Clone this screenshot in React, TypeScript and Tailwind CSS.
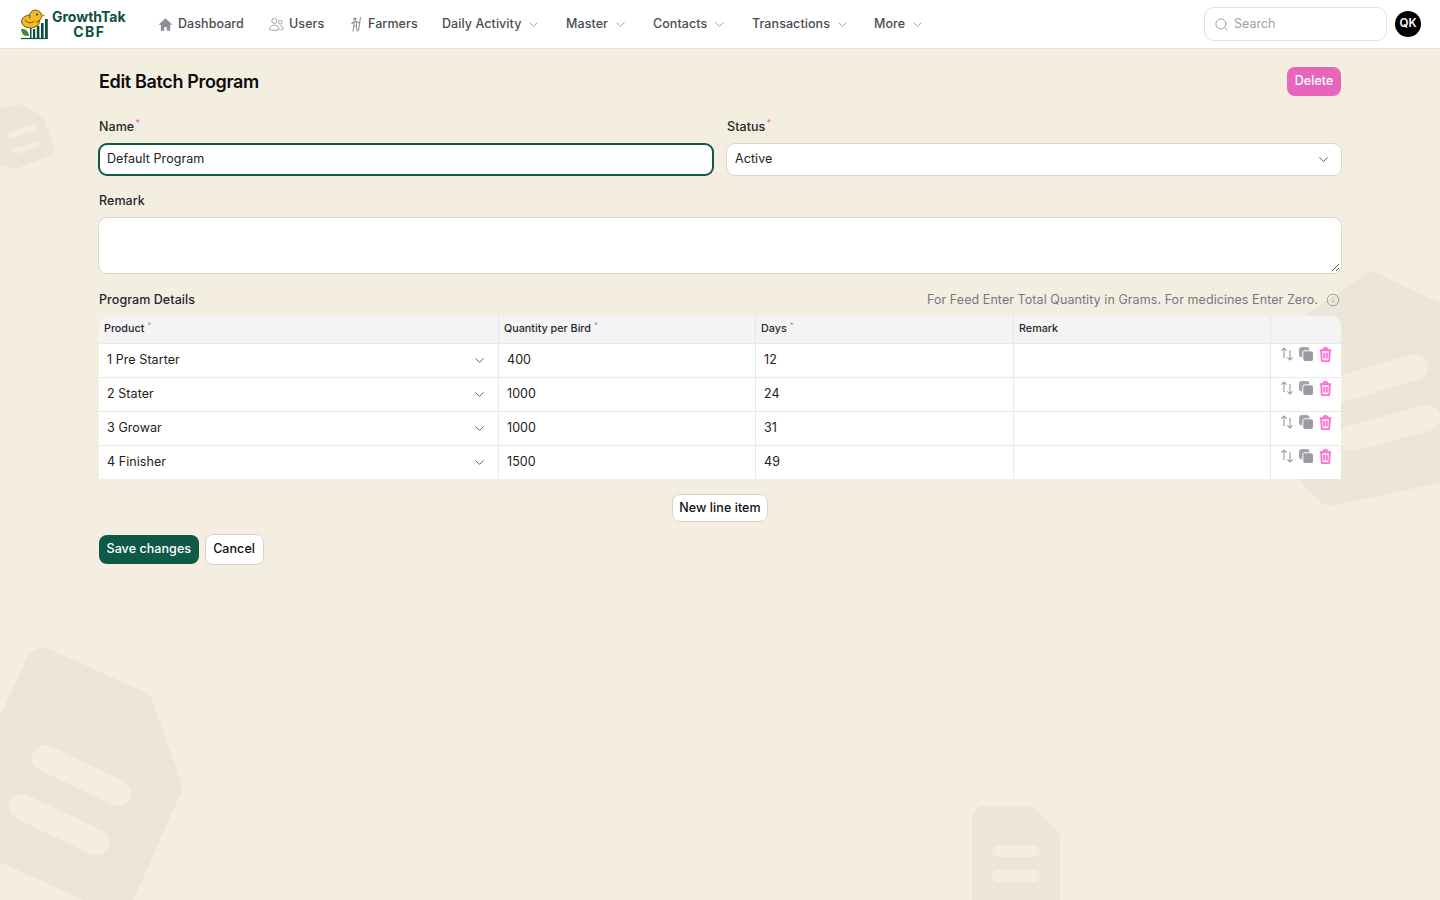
import React from "react";
import { ChevronDown, Search, Info } from "lucide-react";

const Nav = ({ icon, label, chevron, w }: { icon?: React.ReactNode; label: string; chevron?: boolean; w: string }) => (
  <div className={`flex items-center text-[12.5px] tracking-[0.07px] font-medium text-[#4b4b52] ${w}`}>
    {icon}
    <span>{label}</span>
    {chevron && <ChevronDown className="ml-[5px] w-[15px] h-[15px] text-[#8a8a92]" strokeWidth={1.25} />}
  </div>
);

const Req = () => <span className="relative -top-[5px] text-[9px] leading-none text-[#ec6bbd] ml-px">*</span>;

const Logo = () => (
  <svg width="29" height="31" viewBox="0 0 29 31" className="shrink-0">
    <ellipse cx="10.500" cy="12.500" rx="9" ry="6.500" fill="#f3bb1c" stroke="#3b3410" strokeWidth="0.8" />
    <circle cx="15.500" cy="7" r="6" fill="#f3bb1c" stroke="#3b3410" strokeWidth="0.8" />
    <path d="M9 9.500h7v5H9z" fill="#f3bb1c" />
    <path d="M21 4.500 25 6.500 21 8.500z" fill="#e08a1a" />
    <path d="M5 11c2 3 6 3.500 9 1.500" fill="none" stroke="#3b3410" strokeWidth="0.8" />
    <circle cx="17" cy="5.500" r="0.900" fill="#222" />
    <rect x="10" y="19" width="1.500" height="10.500" fill="#0f4f40" />
    <rect x="13" y="20" width="2.200" height="9.500" fill="#0f4f40" />
    <rect x="16.800" y="17" width="2.600" height="12.500" fill="#0f4f40" />
    <rect x="21" y="14" width="2.600" height="15.500" fill="#0f4f40" />
    <rect x="25" y="10" width="2.800" height="19.500" fill="#0f4f40" />
    <path d="M1 20c3.500-.5 7.500 1 8 6.500-4 1.500-7.500-1-8-6.500z" fill="#3f8a3a" />
    <path d="M1 29.500h26.800" stroke="#0f4f40" strokeWidth="1.200" />
  </svg>
);

const Home = () => (
  <svg width="15" height="15" viewBox="0 0 24 24" className="mr-[5px] -ml-px text-[#8f8f98]" fill="currentColor">
    <path d="M12 2 1 12.500h3.500V22H10v-6h4v6h5.500v-9.500H23z" />
  </svg>
);
const UsersIc = () => (
  <svg width="15" height="14" viewBox="0 0 24 22" className="mr-[5px] text-[#9b9ba3]" fill="none" stroke="currentColor" strokeWidth="1.500">
    <circle cx="8.500" cy="6" r="4" />
    <path d="M1 20c0-5 3-7 7.500-7s7.500 2 7.500 7c-3 1.500-12 1.500-15 0z" />
    <circle cx="18" cy="8" r="3" />
    <path d="M18 14c3 0 5 2 5 5-1 .6-2.500 1-4 1" />
  </svg>
);
const Farmer = () => (
  <svg width="12" height="16" viewBox="0 0 12 16" className="mr-[6px] text-[#8f8f98]" fill="none" stroke="currentColor" strokeWidth="1.100">
    <circle cx="5" cy="3" r="1.600" fill="currentColor" stroke="none" />
    <path d="M1.500 8 4 5.500h2.500L9 7M4 5.500 4 10 3 15.500M6.500 5.500 6.500 10 7 15.500M4 10h2.500M10.500 1 8.500 15" />
  </svg>
);
const Copy = () => (
  <svg width="15" height="15" viewBox="0 0 15 15">
    <rect x="0" y="0" width="10.500" height="10.500" rx="3" fill="#a4a4ac" />
    <rect x="3.800" y="3.800" width="10.700" height="10.700" rx="2.500" fill="#9a9aa3" stroke="#fff" strokeWidth="1" />
  </svg>
);
const Trash = () => (
  <svg width="13" height="15" viewBox="0 0 13 15" fill="none" stroke="#ff70d2" strokeWidth="1.900">
    <path d="M.8 3.200h11.400M4.300 3.200C4.300 1.800 5 .9 6.500.9s2.200.9 2.200 2.300M2.200 3.200l.5 10a1 1 0 0 0 1 .9h5.600a1 1 0 0 0 1-.9l.5-10M5.200 5.700v5.800M7.800 5.700v5.800" />
  </svg>
);
const Swap = () => (
  <svg width="14" height="14" viewBox="0 0 14 14" fill="none" stroke="#a0a0a8" strokeWidth="1.200">
    <path d="M4 11V1M1.300 3.700 4 1l2.700 2.700M10 3v10M7.300 10.300 10 13l2.700-2.700" />
  </svg>
);

const rows = [
  ["1 Pre Starter", "400", "12"],
  ["2 Stater", "1000", "24"],
  ["3 Growar", "1000", "31"],
  ["4 Finisher", "1500", "49"],
];
const grid = "grid grid-cols-[400px_257px_258px_257px_70px]";

export default function App() {
  return (
    <div className="relative h-[900px] overflow-hidden bg-[#f4eee1] text-[#111] font-['Inter',sans-serif]">
      <svg className="absolute inset-0 pointer-events-none" width="1440" height="900" viewBox="0 0 1440 900">
        <g fill="#ece6da" stroke="#ece6da" strokeLinejoin="round">
          <path strokeWidth="36" d="M43 666 136 708 164 787 116 895-20 833V800L-10 781z" />
          <path strokeWidth="24" d="M984 818h44l20 20v70h-64z" />
          <path strokeWidth="24" d="M1372 284 1452 322V468L1330 494 1312 478 1290 340z" />
          <path strokeWidth="12" d="M-6 116 18 110 38 120 49 150 14 163 2 160z" />
        </g>
        <g fill="none" stroke="#f4eee1" strokeLinecap="round">
          <path strokeWidth="26" d="M45 758 118 793M22 807 96 842" />
          <path strokeWidth="12" d="M998 851h36M998 876h36" />
          <path strokeWidth="26" d="M1320 395 1415 367M1352 438 1427 418" />
          <path strokeWidth="6" d="M12 135 33 128M16 151 37 144" />
        </g>
      </svg>

      <header className="relative flex items-center h-[49px] bg-white border-b border-[#e6e0d2] pl-[20px] pr-[19px]">
        <div className="flex items-center w-[139px]">
          <Logo />
          <div className="ml-[3px] text-[#0f4f40] font-bold text-[14px] leading-[15px] text-center">
            <div>GrowthTak</div>
            <div className="tracking-[1.5px] pl-[1px]">CBF</div>
          </div>
        </div>
        <Nav icon={<Home />} label="Dashboard" w="w-[110px]" />
        <Nav icon={<UsersIc />} label="Users" w="w-[81px]" />
        <Nav icon={<Farmer />} label="Farmers" w="w-[92px]" />
        <Nav label="Daily Activity" chevron w="w-[124px]" />
        <Nav label="Master" chevron w="w-[87px]" />
        <Nav label="Contacts" chevron w="w-[99px]" />
        <Nav label="Transactions" chevron w="w-[122px]" />
        <Nav label="More" chevron w="w-[80px]" />
        <div className="ml-auto flex items-center gap-2">
          <div className="flex items-center w-[183px] h-[34px] rounded-[10px] border border-[#e2e2e6] bg-white pl-[9px]">
            <Search className="w-[15px] h-[15px] text-[#9a9aa2]" strokeWidth={1.5} />
            <span className="ml-[5px] text-[12.5px] text-[#a1a1aa]">Search</span>
          </div>
          <div className="flex items-center justify-center w-[26px] h-[26px] rounded-full bg-black text-white text-[11.5px] font-semibold">QK</div>
        </div>
      </header>

      <main className="relative px-[99px] text-[12.5px] tracking-[0.07px]">
        <div className="flex items-center justify-between pt-[18px]">
          <h1 className="text-[18px] font-semibold tracking-[-0.35px] text-[#0c0c0e]">Edit Batch Program</h1>
          <button className="h-[29px] px-[7.5px] rounded-[8px] bg-[#e766bb] text-white font-medium">Delete</button>
        </div>

        <div className="grid grid-cols-[614px_614px] gap-x-[14px] mt-[22px]">
          <div>
            <label className="block h-[18px] leading-[18px] font-medium text-[#26262a]">Name<Req /></label>
            <div className="mt-[7px] -mx-px h-[33px] rounded-[9px] border-2 border-[#0f5a47] bg-white flex items-center pl-[7px] text-[#222]">Default Program</div>
          </div>
          <div>
            <label className="block h-[18px] leading-[18px] font-medium text-[#26262a]">Status<Req /></label>
            <div className="mt-[7px] -mx-px h-[33px] rounded-[9px] border border-[#dbd6ca] bg-white flex items-center justify-between pl-[8px] pr-[10px] text-[#222]">
              Active
              <ChevronDown className="w-[15px] h-[15px] text-[#55555c]" strokeWidth={1.5} />
            </div>
          </div>
        </div>

        <label className="block mt-[16px] h-[18px] leading-[18px] font-medium text-[#26262a]">Remark</label>
        <div className="relative mt-[7px] -mx-px h-[57px] rounded-[9px] border border-[#dbd6ca] bg-white">
          <svg className="absolute right-[1px] bottom-[1px]" width="9" height="9" viewBox="0 0 9 9" stroke="#555" strokeWidth="1"><path d="M1 8 8 1M5 8 8 5" /></svg>
        </div>

        <div className="flex items-center justify-between mt-[17px] h-[18px]">
          <span className="font-medium text-[#26262a]">Program Details</span>
          <span className="flex items-center text-[#77777f]">
            For Feed Enter Total Quantity in Grams. For medicines Enter Zero.
            <Info className="ml-[8px] mr-px w-[14px] h-[14px] text-[#85858d]" strokeWidth={1.25} />
          </span>
        </div>

        <div className="mt-[7px] rounded-t-[10px] overflow-hidden bg-white w-[1242px]">
          <div className={`${grid} h-[26.5px] bg-[#f4f4f5] text-[10.75px] tracking-normal font-medium text-[#26262a]`}>
            {["Product", "Quantity per Bird", "Days", "Remark", ""].map((h, i) => (
              <div key={i} className={`flex items-center pl-[5px] ${i < 4 ? "border-r border-[#e6e6e6]" : ""}`}>
                {h}
                {i < 3 && <span className="relative -top-[4px] ml-[3px] text-[8px] leading-none text-[#ec6bbd]">*</span>}
              </div>
            ))}
          </div>
          {rows.map((r) => (
            <div key={r[0]} className={`${grid} h-[34px] border-t border-[#e9e9eb] text-[#222]`}>
              <div className="flex items-center justify-between pl-[8px] pr-[11px] border-r border-[#e9e9eb]">
                {r[0]}
                <ChevronDown className="w-[15px] h-[15px] text-[#55555c]" strokeWidth={1.5} />
              </div>
              <div className="flex items-center pl-[8px] border-r border-[#e9e9eb]">{r[1]}</div>
              <div className="flex items-center pl-[8px] border-r border-[#e9e9eb]">{r[2]}</div>
              <div className="border-r border-[#e9e9eb]" />
              <div className="flex items-start gap-[5px] pl-[9px] pt-[3px]">
                <Swap />
                <Copy />
                <Trash />
              </div>
            </div>
          ))}
        </div>

        <div className="flex justify-center mt-[15.5px]">
          <button className="h-[28px] px-[6px] rounded-[8px] border border-[#d8d3c6] bg-white font-medium text-[#111]">New line item</button>
        </div>

        <div className="flex items-center gap-[6px] mt-[12px]">
          <button className="h-[29px] px-[7.5px] rounded-[8px] bg-[#0f5a47] text-white font-medium">Save changes</button>
          <button className="h-[31px] px-[7.5px] rounded-[8px] border border-[#d8d3c6] bg-white font-medium text-[#111]">Cancel</button>
        </div>
      </main>
    </div>
  );
}
